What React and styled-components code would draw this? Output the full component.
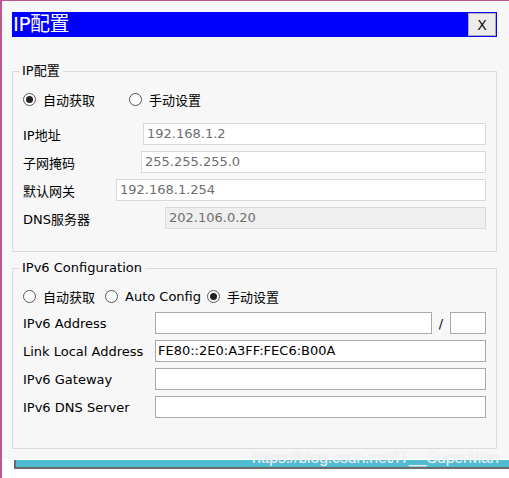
import React from "react";
import styled, { createGlobalStyle } from "styled-components";

const GlobalStyle = createGlobalStyle`
  body {
    margin: 0;
    padding: 0;
    background: #ffffff;
  }
`;

const CJK = `"DejaVu Sans", "Noto Sans CJK SC", sans-serif`;

const Screen = styled.div`
  width: 509px;
  height: 478px;
  box-sizing: border-box;
  border-left: 2px solid #c0568f;
  display: flex;
  flex-direction: column;
  position: relative;
  overflow: hidden;
  font-family: ${CJK};
  font-size: 13px;
  color: #000;
`;

const Dialog = styled.div`
  height: 459px;
  box-sizing: border-box;
  border-top: 1px solid #c0568f;
  background: #f7f7f7;
  padding: 11px 12px 0 10px;
  display: flex;
  flex-direction: column;
`;

const TitleBar = styled.div`
  height: 25px;
  background: #0000ff;
  display: flex;
  align-items: center;
  justify-content: space-between;
  padding: 0 1px 0 1px;
`;

const Title = styled.div`
  color: #ffffff;
  font-size: 20px;
  line-height: 25px;
  font-family: "DejaVu Sans", "Noto Sans CJK SC", sans-serif;
  letter-spacing: -0.5px;
`;

const CloseButton = styled.button`
  width: 28px;
  height: 23px;
  box-sizing: border-box;
  background: #ececec;
  border: 1px solid #adadad;
  font-family: "DejaVu Sans", sans-serif;
  font-size: 14px;
  color: #111;
  padding: 0;
`;

const Group = styled.fieldset`
  margin: ${({ $mt }) => $mt}px 0 0 0;
  border: 1px solid #dcdcdc;
  padding: 9px 10px ${({ $pb }) => $pb}px 10px;
  min-inline-size: 0;
  display: flex;
  flex-direction: column;
`;

const Legend = styled.legend`
  padding: 0 3px;
  margin-left: -4px;
  line-height: 18px;
  font-size: 13px;
`;

const RadioRow = styled.div`
  height: 20px;
  display: flex;
  align-items: center;
  margin-bottom: ${({ $mb }) => $mb}px;
`;

const Option = styled.label`
  display: flex;
  align-items: center;
  gap: 7px;
  margin-left: ${({ $ml }) => $ml || 0}px;
  white-space: nowrap;
`;

const Radio = styled.span`
  width: 13px;
  height: 13px;
  box-sizing: border-box;
  border-radius: 50%;
  border: 1px solid #555;
  background: #fff;
  display: flex;
  align-items: center;
  justify-content: center;
  &::after {
    content: "";
    width: 7px;
    height: 7px;
    border-radius: 50%;
    background: ${({ $on }) => ($on ? "#222" : "transparent")};
  }
`;

const Fields = styled.div`
  display: flex;
  flex-direction: column;
  gap: 6px;
`;

const Row = styled.div`
  height: 22px;
  display: flex;
  align-items: center;
`;

const Label = styled.span`
  width: ${({ $w }) => $w}px;
  flex: none;
  white-space: nowrap;
`;

const Input = styled.div`
  flex: ${({ $w }) => ($w ? "none" : "1")};
  width: ${({ $w }) => ($w ? `${$w}px` : "auto")};
  height: 22px;
  box-sizing: border-box;
  border: 1px solid ${({ $dark }) => ($dark ? "#a9a9a9" : "#d9d9d9")};
  background: ${({ $disabled }) => ($disabled ? "#efefef" : "#ffffff")};
  color: ${({ $dark }) => ($dark ? "#000" : "#6e6e6e")};
  padding-left: ${({ $dark }) => ($dark ? 2 : 3)}px;
  line-height: 20px;
  white-space: nowrap;
  overflow: hidden;
`;

const Slash = styled.span`
  width: 18px;
  text-align: center;
  flex: none;
`;

const BottomStrip = styled.div`
  margin: 1px 0 0 12px;
  height: 7px;
  background: #50bcd2;
  border-left: 2px solid #6b6b6b;
  border-bottom: 2px solid #6b6b6b;
`;

const Watermark = styled.div`
  position: absolute;
  left: 250px;
  top: 449px;
  font-family: "Liberation Sans", sans-serif;
  font-size: 16px;
  letter-spacing: -0.2px;
  color: rgba(255, 255, 255, 0.8);
  text-shadow: 0 0 1px rgba(190, 190, 190, 0.6);
  pointer-events: none;
  white-space: nowrap;
`;

const ipv4Rows = [
  { label: "IP地址", w: 120, value: "192.168.1.2" },
  { label: "子网掩码", w: 118, value: "255.255.255.0" },
  { label: "默认网关", w: 93, value: "192.168.1.254" },
  { label: "DNS服务器", w: 142, value: "202.106.0.20", disabled: true },
];

export default function App() {
  return (
    <>
      <GlobalStyle />
      <Screen>
        <Dialog>
          <TitleBar>
            <Title>IP配置</Title>
            <CloseButton>X</CloseButton>
          </TitleBar>

          <Group $mt={25} $pb={22}>
            <Legend>IP配置</Legend>
            <RadioRow $mb={14}>
              <Option>
                <Radio $on />
                自动获取
              </Option>
              <Option $ml={34}>
                <Radio />
                手动设置
              </Option>
            </RadioRow>
            <Fields>
              {ipv4Rows.map((r) => (
                <Row key={r.label}>
                  <Label $w={r.w}>{r.label}</Label>
                  <Input $disabled={r.disabled}>{r.value}</Input>
                </Row>
              ))}
            </Fields>
          </Group>

          <Group $mt={7} $pb={30}>
            <Legend>IPv6 Configuration</Legend>
            <RadioRow $mb={6}>
              <Option>
                <Radio />
                自动获取
              </Option>
              <Option $ml={10}>
                <Radio />
                Auto Config
              </Option>
              <Option $ml={6}>
                <Radio $on />
                手动设置
              </Option>
            </RadioRow>
            <Fields>
              <Row>
                <Label $w={132}>IPv6 Address</Label>
                <Input $dark />
                <Slash>/</Slash>
                <Input $dark $w={36} />
              </Row>
              <Row>
                <Label $w={132}>Link Local Address</Label>
                <Input $dark>FE80::2E0:A3FF:FEC6:B00A</Input>
              </Row>
              <Row>
                <Label $w={132}>IPv6 Gateway</Label>
                <Input $dark />
              </Row>
              <Row>
                <Label $w={132}>IPv6 DNS Server</Label>
                <Input $dark />
              </Row>
            </Fields>
          </Group>
        </Dialog>
        <BottomStrip />
        <Watermark>https://blog.csdn.net/IT__SuperMan</Watermark>
      </Screen>
    </>
  );
}
